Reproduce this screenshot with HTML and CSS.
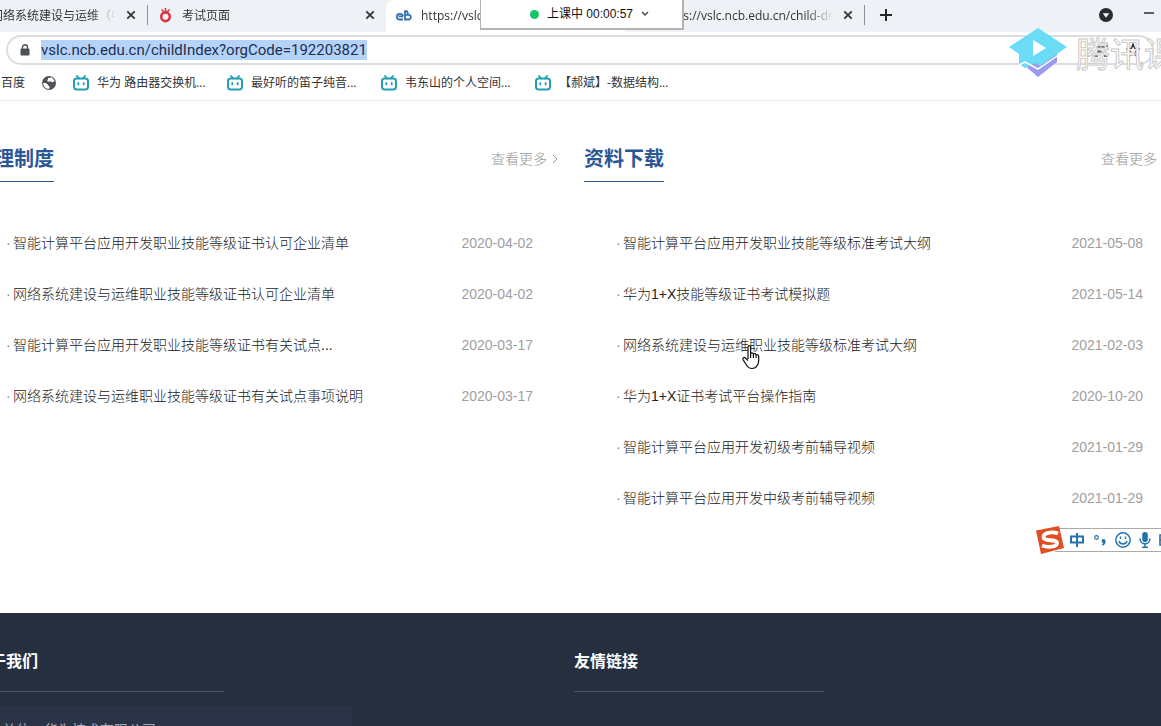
FILE: index.html
```html
<!DOCTYPE html>
<html lang="zh-CN">
<head>
<meta charset="utf-8">
<title>资料下载</title>
<link rel="stylesheet" href="styles.css">
</head>
<body>
<svg class="defs" width="0" height="0" aria-hidden="true">
  <symbol id="tv" viewBox="0 0 16 16">
    <path d="M4 1l2.200 2.500M12 1L9.800 3.500" stroke="#23a0b0" stroke-width="1.800" stroke-linecap="round"/>
    <rect x="1" y="3.600" width="14" height="10.800" rx="2.600" fill="none" stroke="#23a0b0" stroke-width="2"/>
    <path d="M5.300 7.800v1.600M10.700 7.800v1.600" stroke="#23a0b0" stroke-width="1.800" stroke-linecap="round"/>
  </symbol>
  <symbol id="x" viewBox="0 0 12 12"><path d="M2.300 2.300l7.400 7.400M9.700 2.300l-7.400 7.400" stroke="#333639" stroke-width="1.800"/></symbol>
  <symbol id="cloud" viewBox="0 0 16 16">
    <path d="M7 9.300H2.500M7 12.500H3.500A2.700 2.700 0 0 1 3.500 7C5.500 6.500 7 8 7 9.300M9 3.500v9h3.500a2.300 2.300 0 0 0 0-4.600H9M12 7.500C12 5 10.800 4 9 4" fill="none" stroke="#3273b0" stroke-width="1.800"/>
  </symbol>
</svg>

<header class="browser">
  <nav class="tabs" aria-label="标签页">
    <div class="tab">
      <svg class="fav" viewBox="0 0 16 16"><use href="#cloud"/></svg>
      <span class="tab-title">华为认证网络系统建设与运维（中级）</span>
      <button class="close" aria-label="关闭"><svg viewBox="0 0 12 12"><use href="#x"/></svg></button>
    </div>
    <div class="tab divided">
      <svg class="fav" viewBox="0 0 16 16"><circle cx="8.500" cy="9.800" r="4.300" fill="none" stroke="#d83a45" stroke-width="2.600"/><path d="M4.500 2.500l3 3M8.500 1v4M12.500 2.500l-3 3" stroke="#d83a45" stroke-width="1.600"/></svg>
      <span class="tab-title">考试页面</span>
      <button class="close" aria-label="关闭"><svg viewBox="0 0 12 12"><use href="#x"/></svg></button>
    </div>
    <div class="tab active">
      <svg class="fav" viewBox="0 0 16 16"><use href="#cloud"/></svg>
      <span class="tab-title">https://vslc.ncb.edu.cn/childIndex</span>
      <button class="close" aria-label="关闭"><svg viewBox="0 0 12 12"><use href="#x"/></svg></button>
    </div>
    <div class="tab">
      <svg class="fav" viewBox="0 0 16 16"><use href="#cloud"/></svg>
      <span class="tab-title">https://vslc.ncb.edu.cn/child-detail</span>
      <button class="close" aria-label="关闭"><svg viewBox="0 0 12 12"><use href="#x"/></svg></button>
    </div>
    <button class="new-tab divided" aria-label="新标签页"><svg width="12" height="12" viewBox="0 0 12 12"><path d="M6 0v12M0 6h12" stroke="#25282b" stroke-width="2"/></svg></button>
    <div class="window-tools">
      <button aria-label="搜索标签页"><svg width="14" height="14" viewBox="0 0 14 14"><circle cx="7" cy="7" r="7" fill="#292d31"/><path d="M3.800 5.200h6.400L7 9.800z" fill="#fff"/></svg></button>
      <button aria-label="最小化"><svg width="12" height="14" viewBox="0 0 12 14"><path d="M1 5h10" stroke="#292d31" stroke-width="1.500"/></svg></button>
    </div>
  </nav>

  <div class="address">
    <svg class="lock" width="10" height="12" viewBox="0 0 10 12"><rect x="0.500" y="4.500" width="9" height="7" rx="1" fill="#4d5155"/><path d="M2.500 5V3.200a2.500 2.500 0 0 1 5 0V5" fill="none" stroke="#4d5155" stroke-width="1.400"/></svg>
    <a class="url" href="#">vslc.ncb.edu.cn/childIndex?orgCode=192203821</a>
    <div class="address-tools">
      <svg width="14" height="14" viewBox="0 0 14 14"><path d="M1 4V1h3M10 1h3v3M13 10v3h-3M4 13H1v-3M4 4h2v2H4zM8 4h2v2H8zM4 8h2v2H4zM8 8h2v2H8z" fill="none" stroke="#444" stroke-width="1.300"/></svg>
      <svg width="14" height="14" viewBox="0 0 14 14"><path d="M7 1l1.500 4.200L13 6 9.500 8.500l1 4.500L7 10.500 3.500 13l1-4.500L1 6l4.500-.8z" fill="none" stroke="#333" stroke-width="1.400"/></svg>
    </div>
  </div>

  <nav class="bookmarks" aria-label="书签">
    <a href="#">百度</a>
    <a href="#" aria-label="网页"><svg width="16" height="16" viewBox="0 0 16 16"><circle cx="8" cy="8" r="7" fill="#505458"/><path d="M2.200 8.200c1.500-.6 3 .1 4 .9 1.300.9 1 2.600 2.700 2.700-.4 1-.6 1.600-1 2.100C4.500 13.900 2.200 11.400 2.200 8.200zM7 3l3.500-.5c1 .5 2.600 2 3 3.600-.9 1.500-2.800 1.400-3.300.4-1-.6-2.500.8-3.800-.3-.4-1.400 1-1.600.6-3.200z" fill="#fff"/></svg></a>
    <a class="saved" href="#"><svg width="16" height="16"><use href="#tv"/></svg><span>华为 路由器交换机...</span></a>
    <a class="saved" href="#"><svg width="16" height="16"><use href="#tv"/></svg><span>最好听的笛子纯音...</span></a>
    <a class="saved" href="#"><svg width="16" height="16"><use href="#tv"/></svg><span>韦东山的个人空间...</span></a>
    <a class="saved" href="#"><svg width="16" height="16"><use href="#tv"/></svg><span>【郝斌】-数据结构...</span></a>
  </nav>
</header>

<main class="columns">
  <section>
    <div class="section-head">
      <h2>管理制度</h2>
      <a class="more" href="#">查看更多<svg width="6" height="10" viewBox="0 0 6 10"><path d="M1 1l4 4-4 4" fill="none" stroke="#999"/></svg></a>
    </div>
    <ul class="docs">
      <li><a href="#">智能计算平台应用开发职业技能等级证书认可企业清单</a><time>2020-04-02</time></li>
      <li><a href="#">网络系统建设与运维职业技能等级证书认可企业清单</a><time>2020-04-02</time></li>
      <li><a href="#">智能计算平台应用开发职业技能等级证书有关试点...</a><time>2020-03-17</time></li>
      <li><a href="#">网络系统建设与运维职业技能等级证书有关试点事项说明</a><time>2020-03-17</time></li>
    </ul>
  </section>
  <section>
    <div class="section-head">
      <h2>资料下载</h2>
      <a class="more" href="#">查看更多<svg width="6" height="10" viewBox="0 0 6 10"><path d="M1 1l4 4-4 4" fill="none" stroke="#999"/></svg></a>
    </div>
    <ul class="docs">
      <li><a href="#">智能计算平台应用开发职业技能等级标准考试大纲</a><time>2021-05-08</time></li>
      <li><a href="#">华为1+X技能等级证书考试模拟题</a><time>2021-05-14</time></li>
      <li><a href="#">网络系统建设与运维职业技能等级标准考试大纲</a><time>2021-02-03</time></li>
      <li><a href="#">华为1+X证书考试平台操作指南</a><time>2020-10-20</time></li>
      <li><a href="#">智能计算平台应用开发初级考前辅导视频</a><time>2021-01-29</time></li>
      <li><a href="#">智能计算平台应用开发中级考前辅导视频</a><time>2021-01-29</time></li>
    </ul>
  </section>
</main>

<footer class="footer">
  <section>
    <h3>关于我们</h3>
    <p>主办单位：华为技术有限公司</p>
  </section>
  <section>
    <h3>友情链接</h3>
  </section>
</footer>

<div class="status-bubble"></div>

<button class="class-timer"><i></i>上课中 00:00:57<svg width="8" height="6" viewBox="0 0 8 6"><path d="M1 1l3 3 3-3" fill="none" stroke="#444" stroke-width="1.400"/></svg></button>

<div class="watermark">
  <svg width="58" height="50" viewBox="0 0 58 50">
    <path d="M14 36l16-5 18-10v13L29 49z" fill="#9a9bf0"/>
    <path d="M29 0l29 19-10 7-17 12-5-3-10 5-6-4V26L0 19z" fill="#6bdcf6"/>
    <path d="M10 37l6-3 13 7 19-13" fill="none" stroke="#fff" stroke-width="1.500"/>
    <path d="M24 12v16l13-8z" fill="#fff"/>
  </svg>
  <span>腾讯课堂</span>
</div>

<div class="ime">
  <svg class="ime-logo" width="30" height="30" viewBox="0 0 30 30"><path d="M1 5.500L24 1l5 22-23 6z" fill="#e04e22"/><path d="M23 8.500C17 6 8 8 8.500 12.500S22 13.500 22 18 12 22.500 7 20.500" fill="none" stroke="#fff" stroke-width="3.800"/></svg>
  <svg width="16" height="16" viewBox="0 0 16 16"><path d="M2 4.500h12v6H2zM8 1v14" fill="none" stroke="#2372ae" stroke-width="2"/></svg>
  <svg width="14" height="16" viewBox="0 0 14 16"><circle cx="3.500" cy="5.500" r="1.800" fill="none" stroke="#2372ae" stroke-width="1.200"/><circle cx="10.500" cy="9" r="1.900" fill="#2372ae"/><path d="M11.700 9c.2 2-.8 3.300-2.400 4" fill="none" stroke="#2372ae" stroke-width="1.500"/></svg>
  <svg width="16" height="16" viewBox="0 0 16 16"><circle cx="8" cy="8" r="7.200" fill="none" stroke="#2372ae" stroke-width="1.500"/><path d="M5.500 4.500v2.500M10.500 4.500v2.500M4 9c1 4 7 4 8 0" fill="none" stroke="#2372ae" stroke-width="1.400"/></svg>
  <svg width="12" height="16" viewBox="0 0 12 16"><rect x="3.200" y="0" width="5.600" height="10" rx="2.800" fill="#2372ae"/><path d="M1 6.500c0 7 10 7 10 0M6 12v3M3 15.200h6" fill="none" stroke="#2372ae" stroke-width="1.500"/></svg>
  <svg width="16" height="16" viewBox="0 0 16 16"><path d="M1 3h14v10H1zM1 8h14M5 3v5" fill="none" stroke="#2372ae" stroke-width="1.600"/></svg>
</div>

<svg class="pointer" width="20" height="26" viewBox="0 0 20 26"><path d="M7 15V3.200c0-2 2.600-2 2.600 0v6.600c.5-1.600 2.800-1.200 2.800.4.600-1 2.600-.8 2.700.8.900-.8 2.600-.3 2.600 1.200v4.300c0 3-1 4-1.700 5.300-1 2-3 2.700-5 2.700-3 0-4.300-1.500-5.500-3.500L2 15.600c-.8-1.500 1-2.800 2.300-1.600L7 16.500M9.600 9.800V14M12.400 10.500V14M15.100 11.200V14" fill="#fff" stroke="#111" stroke-width="1.200" stroke-linejoin="round"/></svg>
</body>
</html>
```
FILE: styles.css
```css
* { box-sizing: border-box; }

body {
  margin: 0;
  height: 100vh;
  display: flex;
  flex-direction: column;
  position: relative;
  overflow: hidden;
  background: #fff;
  color: #333;
  font: 14px/24px "Liberation Sans", "Noto Sans CJK SC", sans-serif;
}

a { color: inherit; text-decoration: none; }
button { padding: 0; border: 0; background: none; font: inherit; color: inherit; }
svg { display: block; flex: none; }
.defs { position: absolute; }

/* browser chrome */
.browser {
  border-bottom: 1px solid #e9eaec;
  font: 12px/16px "Open Sans", "Noto Sans CJK SC", sans-serif;
}

.tabs {
  display: flex;
  height: 32px;
  overflow: hidden;
  background: #eef1f6;
}
.tab {
  flex: none;
  width: 239px;
  display: flex;
  align-items: center;
  gap: 9px;
  padding: 0 10px 2px;
}
.tab:first-child { margin-left: -92px; }
.tab.active { background: #fff; border-radius: 8px 8px 0 0; }
.fav { width: 16px; height: 16px; }
.tab-title {
  flex: 1;
  padding-top: 2px;
  overflow: hidden;
  white-space: nowrap;
  mask-image: linear-gradient(to right, #000 85%, transparent);
}
.close svg { width: 12px; height: 12px; }
.divided {
  background: linear-gradient(#8b8f94, #8b8f94) left 5px / 1px 20px no-repeat;
}
.new-tab { width: 44px; padding: 0 16px 2px; }
.window-tools {
  margin-left: auto;
  display: flex;
  align-items: center;
  gap: 30px;
  padding: 0 6px 2px 0;
}

.address {
  display: flex;
  align-items: center;
  height: 30px;
  margin: 3px 7px 0 6px;
  padding: 0 12px;
  border: 2px solid #dadde2;
  border-radius: 15px;
}
.lock { margin-right: 11px; }
.url {
  font-family: Roboto, sans-serif;
  font-size: 15px;
  line-height: 20px;
  background: #b5d3f8;
  color: #1c2f50;
}
.address-tools { margin-left: auto; display: flex; gap: 18px; }

.bookmarks {
  display: flex;
  align-items: center;
  gap: 16px;
  height: 35px;
  padding-left: 1px;
  white-space: nowrap;
}
.saved { display: flex; gap: 8px; width: 138px; }

/* two document lists; the centred layout is wider than the window */
.columns {
  display: grid;
  grid-template-columns: 1fr 1fr;
  gap: 26px;
  margin: 0 -7px 0 -26px;
  padding: 42px 0 90px;
}
.section-head { display: flex; justify-content: space-between; }
h2 {
  margin: 0;
  padding-bottom: 6px;
  border-bottom: 1px solid #2c5797;
  color: #2c5797;
  font-size: 20px;
  line-height: 32px;
}
.more {
  display: flex;
  align-items: center;
  gap: 5px;
  height: 32px;
  color: #999;
  font-weight: 300;
}
.docs {
  list-style: none;
  margin: 35px 0 0;
  padding: 0 25px 0 32px;
}
.docs li {
  display: flex;
  align-items: center;
  height: 51px;
  white-space: nowrap;
}
.docs li::before { content: "·"; width: 7px; color: #888; }
.docs a { font-weight: 300; color: #222; }
.docs time { margin-left: auto; color: #a0a0a0; }

.footer {
  flex: 1 0 0;
  display: grid;
  grid-template-columns: 250px 250px;
  gap: 350px;
  margin-left: -26px;
  padding-top: 37px;
  background: #262f40;
  overflow: hidden;
}
h3 {
  margin: 0;
  padding-bottom: 17px;
  border-bottom: 1px solid #4a5262;
  color: #fff;
  font-size: 16px;
  line-height: 24px;
}
.footer p { position: relative; z-index: 1; margin: 26px 0 0; color: #a9aeb7; }

/* floating overlays */
.status-bubble {
  position: absolute;
  left: 0;
  bottom: 0;
  width: 352px;
  height: 20px;
  border-radius: 0 4px 0 0;
  background: #2b3347;
}
.class-timer {
  position: absolute;
  top: 0;
  left: 480px;
  width: 204px;
  height: 30px;
  display: flex;
  align-items: center;
  justify-content: center;
  gap: 8px;
  padding: 0 0 0 16px;
  border: solid #b3b3b3;
  border-width: 0 2px 2px 1px;
  background: #fff;
  color: #111;
  font-size: 12px;
}
.class-timer i { width: 9px; height: 9px; border-radius: 50%; background: #16c667; }

.watermark {
  position: absolute;
  top: 28px;
  right: -51px;
  display: flex;
  gap: 9px;
  color: #fff;
  font: 34px/50px "Noto Sans CJK SC", sans-serif;
  -webkit-text-stroke: 1px #cacaca;
  white-space: nowrap;
}

.ime {
  position: absolute;
  top: 528px;
  right: -18px;
  display: flex;
  align-items: center;
  gap: 8px;
  height: 24px;
  padding-right: 4px;
  border: solid #aaa;
  border-width: 1px 0;
  background: #fff;
}
.ime-logo { margin: -4px -4px -4px -20px; }

.pointer { position: absolute; left: 741px; top: 344px; }
```
